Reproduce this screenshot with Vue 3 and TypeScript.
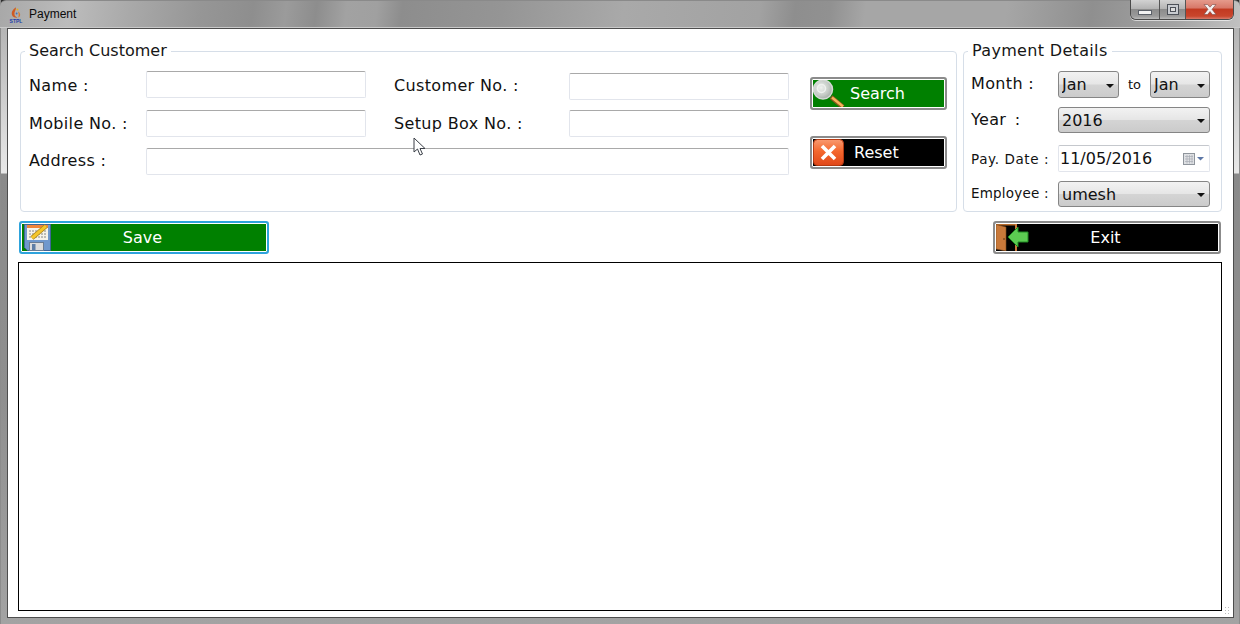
<script setup lang="ts">
const months: string[] = ['Jan', 'Feb', 'Mar', 'Apr', 'May', 'Jun', 'Jul', 'Aug', 'Sep', 'Oct', 'Nov', 'Dec']
</script>

<template>
  <div class="window">
    <header class="titlebar">
      <span class="logo">
        <svg width="10" height="11" viewBox="0 0 10 11">
          <path d="M5 0.200 C1.500 2.500 0 5.500 1 8 C1.800 10 4 11 6.500 10.600 C4.200 9.800 3 8 3.500 5.800 C3.900 4 5 2.400 5 0.200Z" fill="#cf5a22" />
          <path d="M7 4.500 C8.800 5.500 9.600 7.200 9 8.800 C8.600 9.800 8 10.300 7.200 10.600 C7.800 9 8 6.800 7 4.500Z" fill="#d9772a" />
          <circle cx="6.400" cy="2.600" r="1" fill="#e9b022" />
          <circle cx="5.600" cy="6.500" r=".9" fill="#3d6fc0" />
        </svg>
        <span class="logo-text">STPL</span>
      </span>
      <span class="title">Payment</span>
      <div class="controls">
        <span class="ctl ctl-min"><i></i></span>
        <span class="ctl ctl-max"><i></i></span>
        <span class="ctl ctl-close">
          <svg width="14" height="11" viewBox="0 0 14 11"><path d="M1 0.500H4.600L7 3.200L9.400 0.500H13L9 5.300L13 10.500H9.400L7 7.500L4.600 10.500H1L5 5.300Z" fill="#f4f1f1" stroke="#7c4a44" stroke-width=".6" /></svg>
        </span>
      </div>
    </header>

    <main class="client">
      <div class="top">
        <fieldset class="group search-group">
          <legend>Search Customer</legend>
          <div class="search-body">
            <div class="form">
              <div class="row r1">
                <label>Name :</label>
                <input class="field" type="text" />
                <label>Customer No. :</label>
                <input class="field low" type="text" />
              </div>
              <div class="row r2">
                <label>Mobile No. :</label>
                <input class="field" type="text" />
                <label>Setup Box No. :</label>
                <input class="field" type="text" />
              </div>
              <div class="row r3">
                <label>Address :</label>
                <input class="field wide" type="text" />
              </div>
            </div>
            <div class="actions">
              <button class="btn green small" type="button">
                <svg class="icon" width="32" height="27" viewBox="0 0 32 27">
                  <defs>
                    <radialGradient id="lens" cx=".4" cy=".4" r=".7">
                      <stop offset="0" stop-color="#eef1ee" />
                      <stop offset=".6" stop-color="#c4cac5" />
                      <stop offset="1" stop-color="#9aa29c" />
                    </radialGradient>
                  </defs>
                  <path d="M18 17L30 27" stroke="#8a5a20" stroke-width="4.500" />
                  <path d="M19 17.500L30 26.500" stroke="#f3b35a" stroke-width="2.500" />
                  <circle cx="10" cy="9.500" r="9.500" fill="url(#lens)" stroke="#d4d9d5" stroke-width="1.500" />
                  <circle cx="8.500" cy="8.500" r="4" fill="none" stroke="#eef1ee" stroke-width="1.500" />
                </svg>
                <span class="search-label">Search</span>
              </button>
              <button class="btn black small" type="button">
                <svg class="icon" width="31" height="27" viewBox="0 0 31 27">
                  <defs>
                    <linearGradient id="red" x1="0" y1="0" x2="0" y2="1">
                      <stop offset="0" stop-color="#f99a70" />
                      <stop offset=".45" stop-color="#f4682e" />
                      <stop offset="1" stop-color="#e0481a" />
                    </linearGradient>
                  </defs>
                  <rect x=".5" y=".5" width="30" height="26" rx="4" fill="url(#red)" stroke="#b73a12" />
                  <path d="M9 7L22 20M22 7L9 20" stroke="#fff" stroke-width="3.600" />
                </svg>
                <span class="reset-label">Reset</span>
              </button>
            </div>
          </div>
        </fieldset>

        <fieldset class="group pay-group">
          <legend>Payment Details</legend>
          <div class="pay-row pr-month">
            <label>Month :</label>
            <span class="select-wrap month">
              <select class="select"><option v-for="m in months" :key="m">{{ m }}</option></select>
            </span>
            <span class="to">to</span>
            <span class="select-wrap month-to">
              <select class="select"><option v-for="m in months" :key="m">{{ m }}</option></select>
            </span>
          </div>
          <div class="pay-row pr-year">
            <label>Year :</label>
            <span class="select-wrap full">
              <select class="select"><option>2016</option></select>
            </span>
          </div>
          <div class="pay-row pr-date">
            <label class="tiny paydate">Pay. Date :</label>
            <span class="date">
              <span class="date-value">11/05/2016</span>
              <svg width="22" height="12" viewBox="0 0 22 12">
                <rect x=".5" y=".5" width="11" height="11" fill="#dfe1e4" stroke="#8f959c" />
                <path d="M2 3.500H10M2 6H10M2 8.500H10M4 2V10.500M6.500 2V10.500M9 2V10.500" stroke="#a9aeb5" stroke-width=".7" />
                <path d="M14 4H21L17.500 7.500Z" fill="#5c77a6" />
              </svg>
            </span>
          </div>
          <div class="pay-row pr-emp">
            <label class="tiny">Employee :</label>
            <span class="select-wrap full">
              <select class="select"><option>umesh</option></select>
            </span>
          </div>
        </fieldset>
      </div>

      <div class="bar">
        <button class="btn green big focus" type="button">
          <svg class="icon save-icon" width="28" height="27" viewBox="0 0 28 27">
            <path d="M0.500 0.500H26.500V26.500H3.500L0.500 23.500Z" fill="#6f98cd" stroke="#3f6596" />
            <rect x="3" y="1" width="21" height="15" fill="#f6f3ea" />
            <rect x="3" y="1" width="21" height="3" fill="#f0853a" />
            <path d="M5 7H22M5 10H22M5 13H22" stroke="#6a6a6a" stroke-width=".8" stroke-dasharray="2 1" />
            <rect x="5.500" y="18.500" width="14" height="8" fill="#dcdcdc" stroke="#6a7d94" />
            <rect x="8" y="20" width="3.500" height="6" fill="#5f7ea6" />
            <path d="M8 14L22 2" stroke="#a9821a" stroke-width="4.500" />
            <path d="M8 14L22 2" stroke="#f4c62c" stroke-width="3" />
          </svg>
          <span class="center-label">Save</span>
        </button>
        <button class="btn black big exit" type="button">
          <svg class="icon" width="33" height="27" viewBox="0 0 33 27">
            <rect x="0" y="0" width="21" height="1.500" fill="#b86c2c" />
            <rect x="19" y="0" width="2" height="27" fill="#c9793a" />
            <path d="M0 0.500L10 3V27L0 25Z" fill="#c9793a" stroke="#7d4a1c" stroke-width=".6" />
            <circle cx="8" cy="15" r=".8" fill="#4a2c10" />
            <path d="M12 13L22 3V8H32V18H22V23Z" fill="#5ccb52" stroke="#1f8a22" />
          </svg>
          <span class="center-label exit-label">Exit</span>
        </button>
      </div>

      <section class="list"></section>
    </main>

    <svg class="cursor" width="14" height="20" viewBox="0 0 14 20">
      <path d="M1 1V15L4.500 12L7 18L9.500 17L7 11.500H12Z" fill="#fff" stroke="#3a3f47" stroke-width="1" />
    </svg>
    <span class="grip"></span>
  </div>
</template>

<style>
html, body { margin: 0; padding: 0; }
</style>

<style scoped>
.window {
  position: relative;
  box-sizing: border-box;
  width: 1240px;
  height: 624px;
  overflow: hidden;
  display: flex;
  flex-direction: column;
  font-family: "DejaVu Sans", Verdana, sans-serif;
  color: #111;
  background: linear-gradient(180deg, #2e2e2e 0, #2e2e2e 8px, #a6a6a6 9px, #b5b5b5 30px, #e8e8e8 173px, #8a8a8a 174px, #8f8f8f 400px, #a3a3a3 624px);
  box-shadow: inset 1px 0 0 #8c8c8c, inset -1px 0 0 #8c8c8c;
}
.titlebar {
  box-sizing: border-box;
  height: 28px;
  flex: none;
  display: flex;
  align-items: flex-start;
  border-top: 1px solid #8a8a8a;
  border-bottom: 1px solid #c9c9c9;
  border-radius: 6px 6px 0 0;
  background: linear-gradient(97deg, #a8a8a8 0, #bcbcbc 70px, #a9a9a9 130px, #969696 200px, #8e8e8e 252px, #9b9b9b 285px, #8d8d8d 315px, #a2a2a2 345px, #a0a0a0 375px, #8d8d8d 400px, #959595 500px, #a9a9a9 620px, #a2a2a2 755px, #8e8e8e 790px, #919191 825px, #a6a6a6 860px, #a6a6a6 1000px, #8f8f8f 1085px, #a4a4a4 1170px, #c4c4c4 1240px);
}
.logo {
  width: 12px;
  margin: 6px 0 0 10px;
  display: flex;
  flex-direction: column;
  align-items: center;
  line-height: 1;
}
.logo-text {
  font: bold 5px/4px "Liberation Sans", sans-serif;
  color: #1c3fa8;
  margin-top: 1px;
}
.title {
  margin: 5px 0 0 7px;
  font: 12px/17px "Liberation Sans", Arial, sans-serif;
  color: #0a0a0a;
}
.controls {
  margin: -1px 6px 0 auto;
  display: flex;
  height: 20px;
  box-sizing: border-box;
  border: 1px solid #4a4a4a;
  border-top: none;
  border-radius: 0 0 6px 6px;
  overflow: hidden;
  box-shadow: 0 1px 0 rgba(255, 255, 255, .6);
}
.ctl {
  display: flex;
  align-items: center;
  justify-content: center;
  box-sizing: border-box;
  background: linear-gradient(180deg, #d2d2d2 0, #b4b4b4 45%, #8c8c8c 50%, #9a9a9a 85%, #bbb 100%);
}
.ctl-min { width: 29px; border-right: 1px solid #555; }
.ctl-min i { width: 14px; height: 5px; margin-top: 6px; background: #f2f2f2; border: 1px solid #5b6068; box-sizing: border-box; }
.ctl-max { width: 26px; border-right: 1px solid #555; }
.ctl-max i { width: 12px; height: 11px; border: 1px solid #4c5058; box-sizing: border-box; background: #ddd; box-shadow: inset 0 0 0 2px #c8cbd0, inset 0 0 0 3px #4c5058; }
.ctl-close {
  width: 47px;
  background: linear-gradient(180deg, #e59a8c 0, #d8796a 40%, #c23a22 50%, #c9452c 85%, #d87a6a 100%);
}
.client {
  flex: 1;
  margin: 0 6px 6px 7px;
  box-sizing: border-box;
  border: 1px solid #4d4d4d;
  background: #fff;
  padding: 12px 11px 6px 10px;
  display: flex;
  flex-direction: column;
  min-height: 0;
}
.top {
  display: flex;
  gap: 6px;
  margin-left: 2px;
  height: 171px;
  flex: none;
}
.group {
  margin: 0;
  min-width: 0;
  box-sizing: border-box;
  height: 171px;
  border: 1px solid #d6dee8;
  border-radius: 4px;
}
.group legend {
  padding: 0 4px;
  font-size: 16px;
  line-height: 20px;
  color: #161616;
}
.search-group { width: 937px; padding: 10px 0 0 8px; }
.search-group legend { margin-left: -4px; }
.pay-group { width: 259px; padding: 10px 0 0 7px; }
.pay-group legend { margin-left: -3px; letter-spacing: .33px; }
.search-body { display: flex; gap: 21px; }
.form { width: 760px; }
.row {
  display: grid;
  grid-template-columns: 117px 220px 203px 220px;
  grid-template-rows: 27px;
  height: 27px;
  align-items: center;
}
.row label { font-size: 16px; height: 27px; line-height: 27px; letter-spacing: .35px; }
.row label:nth-of-type(2) { margin-left: 28px; }
.r1 label { line-height: 29px; }
.r2 { margin-top: 12px; }
.r3 { margin-top: 11px; }
.r3 label { line-height: 25px; }
.field {
  box-sizing: border-box;
  width: 100%;
  height: 27px;
  margin: 0;
  padding: 0;
  border: 1px solid #e2e5ec;
  border-top-color: #a9a9a9;
  border-radius: 2px;
  background: #fff;
  outline: none;
}
.low { position: relative; top: 2px; }
.wide { grid-column: 2 / 5; }
.actions {
  display: flex;
  flex-direction: column;
  gap: 26px;
  padding-top: 6px;
}
.btn {
  box-sizing: border-box;
  display: flex;
  align-items: center;
  margin: 0;
  padding: 0 1px;
  border: 2px solid #8b8b8b;
  border-radius: 3px;
  box-shadow: inset 0 0 0 1px #fff;
  color: #fff;
  font-family: "DejaVu Sans", Verdana, sans-serif;
  font-size: 16px;
  line-height: 20px;
  height: 33px;
}
.green { background: #008000; }
.black { background: #000; }
.small { width: 137px; }
.big { flex: none; }
.focus { width: 250px; border-color: #2ea3dc; }
.exit { width: 228px; }
.icon { flex: none; display: block; }
.save-icon { margin-left: 2px; }
.search-label { margin-left: 5px; }
.reset-label { margin-left: 10px; }
.center-label { flex: 1; text-align: center; }
.focus .center-label { padding-right: 33px; }
.exit-label { padding-right: 36px; }
.bar {
  display: flex;
  justify-content: space-between;
  margin: 9px 1px 0 1px;
  flex: none;
}
.list {
  flex: 1;
  margin-top: 8px;
  border: 1px solid #000;
  background: #fff;
  min-height: 0;
}
.pay-row { display: flex; align-items: center; }
.pay-row label { width: 87px; flex: none; font-size: 16px; letter-spacing: .35px; }
.pay-row label.tiny { font-size: 13.500px; letter-spacing: .2px; }
.pay-row label.paydate { letter-spacing: .6px; }
.pr-year label { word-spacing: 3px; }
.pr-month label, .pr-year label, .pr-emp label { margin-bottom: 2px; }
.pr-month { height: 27px; }
.pr-year { height: 26px; margin-top: 9px; }
.pr-date { height: 27px; margin-top: 12px; }
.pr-emp { height: 26px; margin-top: 9px; }
.to { width: 31px; text-align: center; font-size: 13px; }
.select-wrap { position: relative; display: block; height: 100%; }
.select-wrap::after {
  content: "";
  position: absolute;
  right: 5px;
  top: 50%;
  margin-top: -1px;
  border: 4px solid transparent;
  border-bottom: none;
  border-top-color: #111;
  pointer-events: none;
}
.month { width: 61px; }
.month-to { width: 60px; }
.full { width: 152px; }
.select {
  box-sizing: border-box;
  width: 100%;
  height: 100%;
  display: block;
  margin: 0;
  padding: 0 0 0 3px;
  appearance: none;
  border: 1px solid #858585;
  border-radius: 3px;
  outline: none;
  color: #111;
  font-family: "DejaVu Sans", Verdana, sans-serif;
  font-size: 16px;
  background: linear-gradient(180deg, #f2f2f2 0, #e6e6e6 48%, #d4d4d4 52%, #cbcbcb 100%);
}
.date {
  box-sizing: border-box;
  width: 152px;
  height: 27px;
  display: flex;
  align-items: center;
  justify-content: space-between;
  padding: 0 4px 0 1px;
  border: 1px solid #e2e5ec;
  border-top-color: #c5c8cd;
  border-radius: 2px;
  font-size: 16px;
}
.cursor {
  position: absolute;
  left: 413px;
  top: 137px;
}
.grip {
  position: absolute;
  left: 1224px;
  top: 606px;
  width: 7px;
  height: 9px;
  background-image: radial-gradient(circle, #bbb 0.7px, transparent 1px);
  background-size: 3px 3px;
}
</style>
